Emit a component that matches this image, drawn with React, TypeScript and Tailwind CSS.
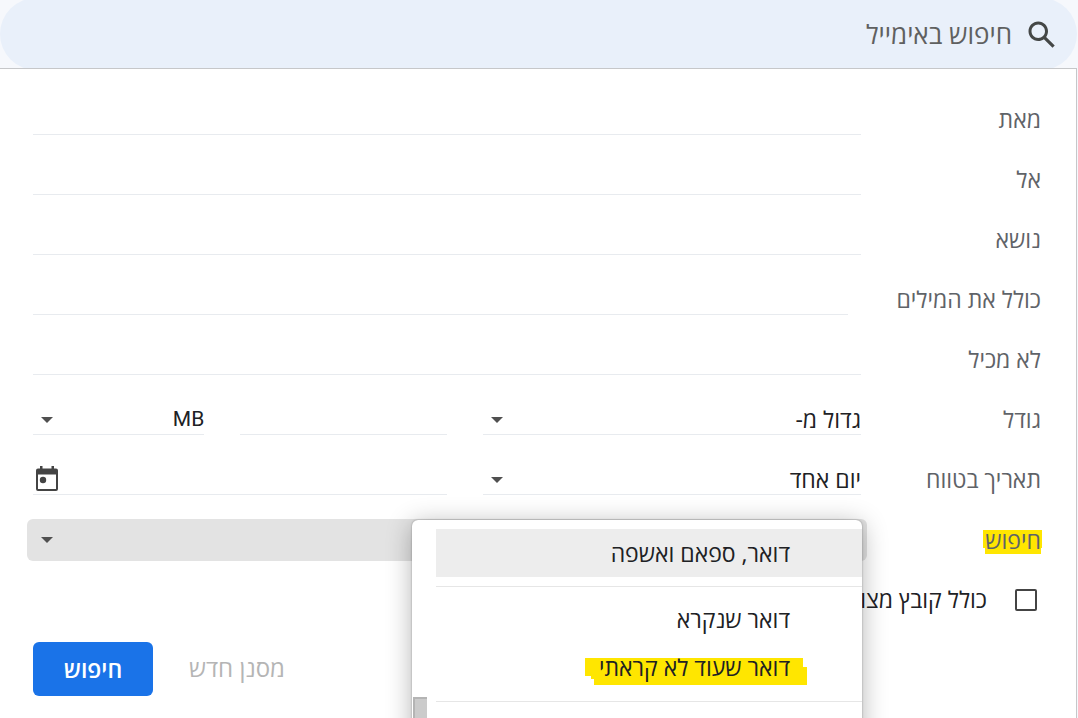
import { ReactNode, useState } from "react";
import clsx from "clsx";

interface RowProps {
  id: string;
  label: string;
  marked?: boolean;
  children: ReactNode;
}

const LINE =
  "h-8 w-full min-w-0 border-b border-[#e8ebef] bg-transparent outline-none";

const TEXT_FIELDS = [
  { id: "from", label: "מאת" },
  { id: "to", label: "אל" },
  { id: "subject", label: "נושא" },
  { id: "has", label: "כולל את המילים", short: true },
  { id: "hasnot", label: "לא מכיל" },
];

function Arrow({ className }: { className?: string }) {
  return (
    <svg
      className={clsx("pointer-events-none absolute h-1.5 w-3", className)}
      viewBox="0 0 12 6"
      fill="#505050"
    >
      <path d="M0 0h12L6 6z" />
    </svg>
  );
}

function Row({ id, label, marked, children }: RowProps) {
  return (
    <div className="flex h-15 items-center">
      <div className="w-[180px] shrink-0">
        <label htmlFor={id} className="relative isolate text-[#5f6368]">
          {marked && (
            <svg
              className="absolute -right-0.5 top-1.5 -z-10 h-6 w-[60px]"
              viewBox="0 0 60 24"
              fill="#ffe600"
            >
              <path d="M0 0h59v18h-1v6H2v-6H0z" />
            </svg>
          )}
          {label}
        </label>
      </div>
      {children}
    </div>
  );
}

function LineSelect({
  id,
  label,
  options,
  latin,
}: {
  id: string;
  label?: string;
  options: string[];
  latin?: boolean;
}) {
  return (
    <div className="relative flex">
      <select
        id={id}
        aria-label={label}
        className={clsx(
          LINE,
          "appearance-none text-[#202124]",
          latin && "font-['Roboto',sans-serif] text-[21px]"
        )}
      >
        {options.map((o) => (
          <option key={o}>{o}</option>
        ))}
      </select>
      <Arrow className="left-2 top-3.5" />
    </div>
  );
}

function ScopeMenu({ onPick }: { onPick: () => void }) {
  const item = "flex h-12 w-full items-center pr-[72px] text-start";

  return (
    <div
      role="listbox"
      aria-label="חיפוש"
      className="absolute right-[5px] top-px z-10 h-[320px] w-[450px] overflow-hidden rounded-md bg-white py-[9px] pl-6 text-[#202124] shadow-[0_0_2px_rgba(0,0,0,0.35),0_4px_26px_rgba(0,0,0,0.3)]"
    >
      <button
        type="button"
        role="option"
        onClick={onPick}
        className={clsx(item, "bg-[#ededed]")}
      >
        דואר, ספאם ואשפה
      </button>
      <hr className="mb-2 mt-[9px] border-[#e6e6e6]" />
      <button type="button" role="option" onClick={onPick} className={item}>
        דואר שנקרא
      </button>
      <button type="button" role="option" onClick={onPick} className={item}>
        <span className="relative isolate">
          <svg
            className="absolute -right-[17px] top-[7px] -z-10 h-7 w-[222px]"
            viewBox="0 0 222 28"
            fill="#ffe600"
          >
            <path d="M0 0h218v9h4v18H9v-6H6v-3H0z" />
          </svg>
          דואר שעוד לא קראתי
        </span>
      </button>
      <hr className="mt-[10px] border-[#e6e6e6]" />

      {/* scrollbar thumb */}
      <div className="absolute left-px top-[177px] h-20 w-3.5 border-l-2 border-t-2 border-[#b4b4b4] bg-[#cbcbcb]" />
    </div>
  );
}

export default function App() {
  const [menuOpen, setMenuOpen] = useState(true);

  return (
    <div
      dir="rtl"
      className="flex min-h-screen flex-col overflow-hidden bg-[#f6f8fc] font-['Open_Sans','Noto_Sans',sans-serif] text-[23px] leading-8"
    >
      <header className="flex h-[68px] items-center overflow-hidden pr-px">
        <div className="flex h-[72px] grow shrink-0 items-center gap-3 rounded-full bg-[#e9f0fa] px-[17px]">
          <svg className="mt-0.5 size-9 shrink-0" viewBox="0 0 24 24" fill="#444746">
            <path d="M20.49 19l-5.73-5.73C15.53 12.2 16 10.91 16 9.5 16 5.91 13.09 3 9.5 3S3 5.91 3 9.5 5.91 16 9.5 16c1.41 0 2.7-.47 3.77-1.24L19 20.49 20.49 19zM5 9.5C5 7.01 7.01 5 9.5 5S14 7.01 14 9.5 11.99 14 9.5 14 5 11.99 5 9.5z" />
          </svg>
          <input
            type="search"
            aria-label="חיפוש באימייל"
            placeholder="חיפוש באימייל"
            className="grow bg-transparent text-[26px] outline-none placeholder:text-[#5f6060]"
          />
        </div>
      </header>

      <form
        onSubmit={(e) => e.preventDefault()}
        className="relative mr-px flex grow flex-col overflow-hidden border-r border-t border-[#c6c7c9] bg-white pb-5 pl-[33px] pr-[35px] pt-5"
      >
        {TEXT_FIELDS.map((f) => (
          <Row key={f.id} id={f.id} label={f.label}>
            <input
              id={f.id}
              type="text"
              className={clsx(LINE, "grow text-[#202124]", f.short && "mr-[13px]")}
            />
          </Row>
        ))}

        <Row id="size" label="גודל">
          <div className="grid grow grid-cols-[378fr_206fr_171fr] gap-9">
            <LineSelect id="size" options={["גדול מ-", "קטן מ-"]} />
            <input type="text" aria-label="ערך הגודל" className={LINE} />
            <LineSelect id="unit" label="יחידת גודל" options={["MB", "KB"]} latin />
          </div>
        </Row>

        <Row id="within" label="תאריך בטווח">
          <div className="grid grow grid-cols-[378fr_206fr_171fr] gap-9">
            <LineSelect id="within" options={["יום אחד", "3 ימים", "שבוע"]} />
            <div className="relative col-span-2 flex">
              <input type="text" aria-label="תאריך" className={LINE} />
              <button
                type="button"
                aria-label="בחירת תאריך"
                className="absolute left-[3px] top-[3px] flex"
              >
                <svg className="h-[25px] w-[22px]" viewBox="0 0 22 25">
                  <path
                    fill="#444"
                    fillRule="evenodd"
                    d="M4 0h2.5v2.5h9V0H18v2.5h2a2 2 0 0 1 2 2V23a2 2 0 0 1-2 2H2a2 2 0 0 1-2-2V4.500a2 2 0 0 1 2-2h2zM2 8.500V23h18V8.500z"
                  />
                  <circle cx="7" cy="14" r="3.200" fill="#444" />
                </svg>
              </button>
            </div>
          </div>
        </Row>

        <div className="pt-px">
          <Row id="scope" label="חיפוש" marked>
            <div className="relative -mx-1.5 h-[42px] grow">
              <select
                id="scope"
                onMouseDown={(e) => {
                  e.preventDefault();
                  setMenuOpen(!menuOpen);
                }}
                className="h-full w-full appearance-none rounded-md bg-[#e3e3e3] outline-none"
              />
              <Arrow className="left-3.5 top-[18px]" />
              {menuOpen && <ScopeMenu onPick={() => setMenuOpen(false)} />}
            </div>
          </Row>
        </div>

        <div className="flex h-15 items-center">
          <label className="flex items-center gap-7 pr-1 text-[#202124]">
            <input
              type="checkbox"
              className="size-[22px] appearance-none rounded-xs border-2 border-[#444] checked:bg-[#444]"
            />
            <span className="pb-0.5">כולל קובץ מצורף</span>
          </label>
        </div>

        <div className="mt-3 flex items-center justify-end gap-9">
          <button type="button" className="pb-0.5 text-2xl text-[#b5b5b5]">
            מסנן חדש
          </button>
          <button
            type="submit"
            className="h-[54px] w-[120px] rounded-md bg-[#1a73e8] font-semibold text-white"
          >
            חיפוש
          </button>
        </div>
      </form>
    </div>
  );
}
